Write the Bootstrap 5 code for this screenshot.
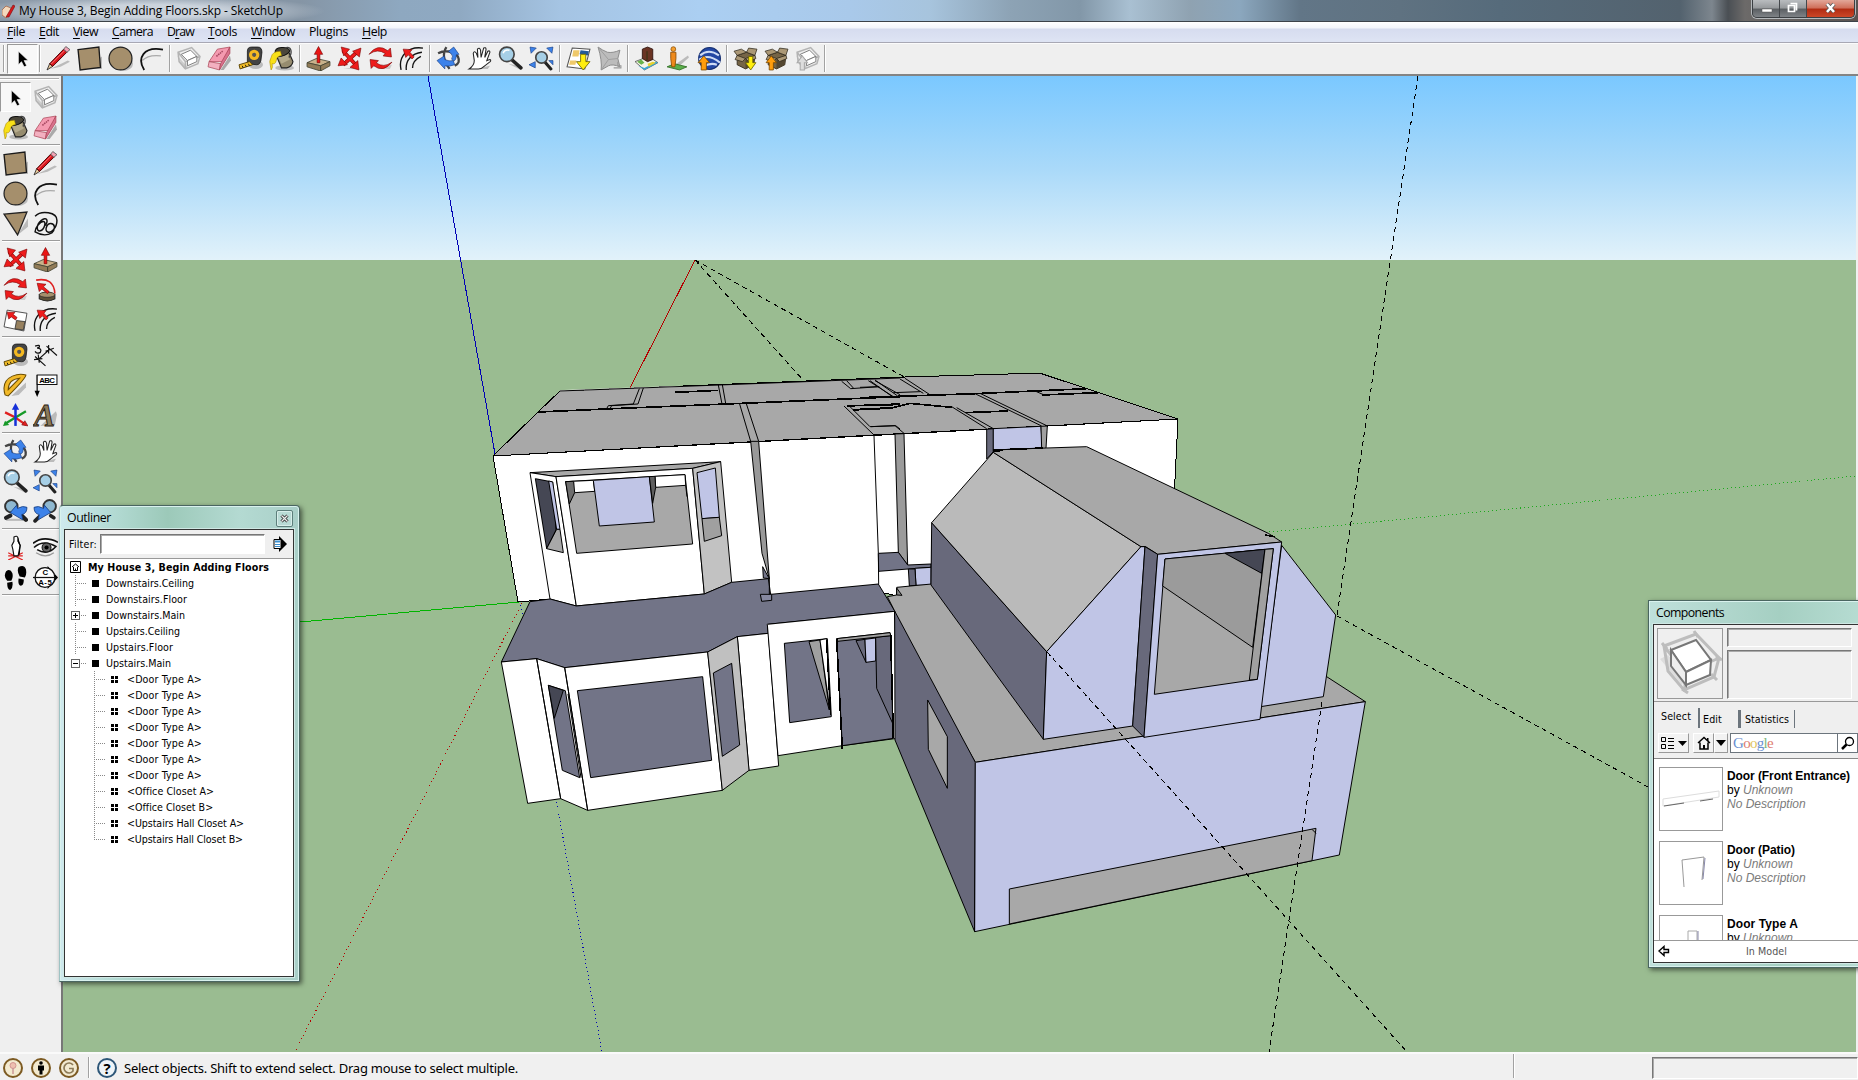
<!DOCTYPE html>
<html lang="en">
<head>
<meta charset="utf-8">
<title>My House 3, Begin Adding Floors.skp - SketchUp</title>
<link href="https://cdn.jsdelivr.net/npm/bootstrap@5.3.0/dist/css/bootstrap.min.css" rel="stylesheet">
<style>
html,body{height:100%;overflow:hidden}
body{font-family:"Open Sans","Noto Sans",sans-serif;font-size:12px;line-height:1;color:#000;background:#f0f0f0}
.app{width:1858px;height:1080px}
.titlebar{height:22px;padding-left:2px;border-bottom:1px solid #3c4249;background:
 radial-gradient(ellipse 175px 16px at 150px 11px,rgba(215,222,230,.85) 40%,rgba(215,222,230,0) 100%),
 linear-gradient(90deg,#8896a5 0,#8595a5 300px,#8ea8c0 400px,#8fa9c2 460px,#a5c4e3 560px,#abcff2 700px,#a9c9ea 850px,#a7c4dd 930px,#8da3b5 1010px,#8297a8 1080px,#a9c0d2 1130px,#8fa2b1 1190px,#8ba7be 1240px,#627687 1300px,#5f7281 1400px,#566b7b 1500px,#53626e 1680px,#7d868e 1712px,#4a4f54 1728px,#6c6a69 1745px,#5a5350 1858px)}
.titlebar .cap{margin-left:4px}
.winbtns{height:18px;margin-right:3px;border:1px solid #3b3f43;border-top:0;border-radius:0 0 5px 5px;box-shadow:0 0 0 1px #b5b9bc;overflow:hidden}
.winbtns span{height:18px;width:27px;background:linear-gradient(#b9bcbf 0,#96999c 45%,#5b5f63 50%,#83878b 100%);border-right:1px solid #44484c}
.winbtns span:last-child{width:47px;border:0;background:linear-gradient(#e2a799 0,#cf6d58 45%,#b02b12 50%,#cf4a2a 100%)}
.menubar{height:21px;background:linear-gradient(#fff 0,#f3f5fb 6px,#d6dcef 7px,#dde3f3 18px);border-bottom:1px solid #a8a8b4}
.menubar a{color:#000;text-decoration:none;margin-left:7px;margin-right:7px;font-size:12.3px}
.menubar u{text-underline-offset:1.5px}
.toolbar{height:33px;background:#efefef;border-top:1px solid #fbfbfb;border-bottom:2px solid #848484;padding-bottom:1px}
.tb{width:31px;height:30px;flex:none;display:flex;align-items:center;justify-content:center}
.tb svg{width:25px;height:25px}
.tb.on{background:#f8f8f8;border:1px solid #fff;border-left-color:#999;border-top-color:#999;padding-right:2px}
.vsep{width:2px;height:27px;margin:0 2px;background:linear-gradient(90deg,#a2a2a2 50%,#fff 50%);flex:none}
.hsep{width:58px;height:2px;margin:2px 1px 2px 2px;background:linear-gradient(#9c9c9c 50%,#fff 50%);flex:none}
.side{width:63px;background:#efefef;border-right:2px solid #777;padding-top:2px}
.side .topline{height:2px;background:#aaa;margin-right:2px;margin-bottom:2px;border-bottom:1px solid #fff}
.side .tb{height:30px;width:30.5px}
.viewport{width:1793px}
.viewport svg{display:block}
.status{height:28px;border-top:2px solid #fafafa;background:#f0f0f0}
.palette{position:absolute;background:linear-gradient(90deg,#bfe0db,#a5cfc2 60%,#b7ddd3);border:1px solid #4a6661;box-shadow:2px 2px 5px rgba(0,0,0,.55),inset 0 0 0 1px #d9f2ee;z-index:2}
#outliner{left:59px;top:505px;width:241px;height:477px;border-radius:4px 4px 0 0;border-left-color:#9fc3c4;padding:0 5px 4px 4px;background:linear-gradient(90deg,#cfe9ee 0,#b5dcd6 20%,#9cc9b9 45%,#b4dad2 75%,#a9cfc8)}
#components{left:1648px;top:600px;width:220px;height:368px;padding:0 4px 4px 4px}
.ptitle{height:23px;padding:2px 1px 0 3px;font-size:12.3px}
.xbtn{width:17px;height:17px;border:1px solid #5d7f7b;border-radius:2px;background:#b9dbd5;box-shadow:inset 0 0 0 1px #d8eeea}
.inner{border:1px solid #333;background:#fff;outline:1px solid #cfe8e4}
.tah{font-family:"DejaVu Sans Condensed","DejaVu Sans",sans-serif;font-stretch:condensed;font-size:10.6px}
.frow{height:29px;background:#efefef;border-bottom:1px solid #999;padding:0 6px 0 4px}
.sunk{border:1px solid #fff;border-left-color:#777;border-top-color:#777;box-shadow:inset 1px 1px 0 #aaa}
.trow{height:16px;white-space:nowrap}
.twig{height:16px;width:11px;flex:none;background:repeating-linear-gradient(#888 0 1px,transparent 1px 2px) 0 0/1px 100% no-repeat,repeating-linear-gradient(90deg,#888 0 1px,transparent 1px 2px) 0 8px/100% 1px no-repeat}
.twig.end{background:repeating-linear-gradient(#888 0 1px,transparent 1px 2px) 0 0/1px 9px no-repeat,repeating-linear-gradient(90deg,#888 0 1px,transparent 1px 2px) 0 8px/100% 1px no-repeat}
.l1{margin-left:10px}.l2{margin-left:29px}
.knob{width:9px;height:9px;border:1px solid #666;background:#fff linear-gradient(#000,#000) center/5px 1px no-repeat;margin-left:6px;flex:none}
.knob.plus{background:linear-gradient(#000,#000) center/5px 1px no-repeat,linear-gradient(#000,#000) center/1px 5px no-repeat,#fff}
.dash{width:6px;height:1px;background:repeating-linear-gradient(90deg,transparent 0 1px,#888 1px 2px);flex:none}
.sq{width:7px;height:7px;background:#000;margin-left:6px;margin-right:7px;flex:none;margin-top:1px}
.sq4{width:7px;height:7px;margin:1px 9px 0 6px;flex:none;background:linear-gradient(#fff,#fff) center/1px 100% no-repeat,linear-gradient(#fff,#fff) center/100% 1px no-repeat,#000}
.comp-h{height:77px;background:#efefef;border-bottom:1px solid #999;padding:3px 0 0 3px}
.thumb1{width:66px;height:71px;border:1px solid #999}
.tabs{height:26px;background:#efefef;padding-top:6px}
.tabs span{height:20px}
.ctool{height:31px;background:#efefef;border-bottom:1px solid #888;padding:5px 0 4px 4px}
.rais{height:20px;border:1px solid #999;border-top-color:#fff;border-left-color:#fff;background:#f2f2f2}
.clist{height:181px;overflow:hidden;padding:8px 0 0 5px;background:#fff}
.citem{height:74px}
.cthumb{width:64px;height:64px;border:1px solid #999;flex:none}
.ctext{padding:2px 0 0 4px;font-family:"Liberation Sans",sans-serif;line-height:14px;font-size:12px;white-space:nowrap}
.ctext b{display:block;font-size:12px}
.ctext em{color:#7b7b7b}
.cfoot{border-top:1px solid #999;height:21px;background:#fff;color:#555}
.goog{font-family:"Liberation Serif",serif;font-size:15px}
.fit{display:inline-block;white-space:pre}
</style>
<script src="https://cdn.jsdelivr.net/npm/bootstrap@5.3.0/dist/js/bootstrap.bundle.min.js"></script>
</head>
<body>
<svg width="0" height="0" class="position-absolute">
<defs>
<symbol id="arrow" viewBox="0 0 24 24"><path d="M9 5v13l3-3 2.500 5 2.500-1-2.500-5h4z" fill="#000" stroke="#fff" stroke-width=".6"/></symbol>
<symbol id="pencil" viewBox="0 0 24 24"><path d="M4 22L21 14l2 1-9 5z" fill="#bbb"/><path d="M1 23l2.500-6 3 2.500z" fill="#e8c89a" stroke="#222" stroke-width=".8"/><path d="M3.500 17L17 3l3 3L6.500 19.500z" fill="#d8141c" stroke="#400" stroke-width=".9"/><path d="M5 17.300L18 4.300" stroke="#ff7a7a" stroke-width=".9"/><path d="M17 3l2-2.500 4 3L20 6z" fill="#f3a3b5" stroke="#555" stroke-width=".8"/></symbol>
<symbol id="rect" viewBox="0 0 24 24"><path d="M6 22h18V10z" fill="#bbb"/><path d="M1 3.500L21 1l1.500 19.500L3 23z" fill="#a58f6c" stroke="#1a1a1a" stroke-width="1.300"/></symbol>
<symbol id="circ" viewBox="0 0 24 24"><ellipse cx="15" cy="17" rx="9" ry="7" fill="#bbb"/><circle cx="12" cy="12" r="11" fill="#a58f6c" stroke="#222" stroke-width="1.200"/></symbol>
<symbol id="tri" viewBox="0 0 24 24"><path d="M14 23L24 7v8z" fill="#bbb"/><path d="M1 3L23 1 14 23z" fill="#a58f6c" stroke="#222" stroke-width="1.200"/></symbol>
<symbol id="arc" viewBox="0 0 24 24"><path d="M3 14Q9 8 21 9.500" fill="none" stroke="#aaa" stroke-width="1.300"/><path d="M5 23C-2 12 4 0 23 3.500" fill="none" stroke="#111" stroke-width="1.700"/></symbol>
<symbol id="free" viewBox="0 0 24 24"><path d="M2 5C8-1 23 1 23 9c0 7-6 13-9 11-3-1-1-8 3-8s5 5 1 9c-5 3-11 2-16-1 0-4 5-10 8-10s1 8-3 9-4-6 1-10 7 0 4 5" fill="none" stroke="#111" stroke-width="1.400"/></symbol>
<symbol id="comp" viewBox="0 0 24 24"><path d="M1 9l7 13 4-1z" fill="#ccc"/><g fill="none" stroke="#b4b4b4" stroke-width="1.500"><path d="M2 6L15 1.500 23 10 21 17 9 22 3 15zM2 6l7 9 14-5M9 15v7"/></g><path d="M5 8l9-4 6 6-9 4z" fill="#fff" stroke="#777" stroke-width=".9"/><path d="M11 14l9-4v5l-9 4z" fill="#fff" stroke="#777" stroke-width=".9"/></symbol>
<symbol id="eraser" viewBox="0 0 24 24"><path d="M13 23L22 9l1 5-7 9z" fill="#aaa"/><path d="M2 15L10 3l12-2-6 14z" fill="#f49ab0" stroke="#a45" stroke-width=".7"/><path d="M2 15l11 2-1 6L1 20z" fill="#f3b0c0" stroke="#a45" stroke-width=".7"/><path d="M13 17L22 1v6l-10 16z" fill="#d8708c" stroke="#a45" stroke-width=".7"/><path d="M9 10l6-5" stroke="#a4465e" stroke-width="1.500" stroke-dasharray="1.500 .7"/></symbol>
<symbol id="tape" viewBox="0 0 24 24"><ellipse cx="17" cy="18" rx="7" ry="4" fill="#bbb"/><path d="M9 5q0-4 4-4h6q4 0 4 5l-1 8q-1 4-4 4l-9-1z" fill="#444" stroke="#111" stroke-width=".7"/><circle cx="15.500" cy="8.500" r="5" fill="#f5b921"/><circle cx="15.500" cy="8.500" r="2" fill="#555"/><path d="M1 18l10-3 3 3-12 4z" fill="#f2bd28" stroke="#5a4200" stroke-width=".9"/><path d="M4 19l1 2M7 18l1 2M10 17l1 2" stroke="#111" stroke-width=".9"/></symbol>
<symbol id="paint" viewBox="0 0 24 24"><ellipse cx="15" cy="21" rx="9" ry="2.500" fill="#bbb"/><path d="M7 9L19 6l4 9q-1 5-6 6l-5 0z" fill="#968c6f" stroke="#222" stroke-width="1.100"/><path d="M9 11l9-3 2 5-8 4z" fill="#b5ab8c"/><path d="M6 7Q5 2 12 1.500T20 5q-4 5-11 5z" fill="#4a463a" stroke="#111"/><path d="M15 2q5-2 6 2t-2 7" fill="none" stroke="#444" stroke-width="1.300"/><path d="M11 5Q3 5 2 11q-2 4-1 6l1 6q2-2 1-6 3 1 4-3 0-4 5-5z" fill="#f8e018" stroke="#a08000" stroke-width=".5"/></symbol>
<symbol id="push" viewBox="0 0 24 24"><path d="M1 16l9-4 13 3-9 4z" fill="#c9b28b" stroke="#443" stroke-width=".8"/><path d="M1 16v4l13 4v-5zM14 19v5l9-5v-4z" fill="#927c58" stroke="#443" stroke-width=".8"/><path d="M10.700 16V8H8l4-7.500L16 8h-2.700v8z" fill="#ea1515" stroke="#700" stroke-width=".6"/></symbol>
<symbol id="move" viewBox="0 0 24 24"><path d="M6 22h16l-3-2z" fill="#ccc"/><path d="M6 5l12 13M19 6L6 18" stroke="#8a0c0c" stroke-width="3.600"/><path d="M5 4l14 15M19 6L6 18" stroke="#ee1c1c" stroke-width="2.400"/><g fill="#ee1c1c" stroke="#7c0808" stroke-width=".6"><path d="M4 1l8 2-5.500 6.500zM23 2l-1.500 8.500-6.500-5.500zM1 19l3-7.500L10 18zM21 23l-8.500-2.500L20 14z"/></g></symbol>
<symbol id="rot" viewBox="0 0 24 24"><path d="M8 22h13l2-4z" fill="#ccc"/><g fill="#ee1c1c" stroke="#7c0808" stroke-width=".6"><path d="M1 8Q9-3 19 4.500L21.500 2l1 8.500-8-1L16.500 7.200Q9 2 1 8z"/><path d="M23 15.500Q15 26 5.500 19L3 21.500l-1-8.500 8 1-2 2.300q7 5 15-.8z"/></g></symbol>
<symbol id="offset" viewBox="0 0 24 24"><path d="M2 23C-1 10 8 0 23 2M7 23C6 14 12 7 22 6M13 21q0-7 8-11" fill="none" stroke="#111" stroke-width="1.300"/><path d="M12.500 12.500L9 8.500 6.500 11 4 3l8.500.500-2 2.500 4 4.500z" fill="#ee1c1c" stroke="#7c0808" stroke-width=".6"/></symbol>
<symbol id="follow" viewBox="0 0 24 24"><path d="M3 3q17-3 18 13" fill="none" stroke="#d22" stroke-width="1.500"/><path d="M6 17q7-5 15 0v4q-7 4-15 0z" fill="#5d5038" stroke="#222"/><ellipse cx="13.500" cy="17" rx="7.500" ry="2.500" fill="#a58f6c" stroke="#222" stroke-width=".6"/><path d="M14 16L8.500 11.500 6 14 4 6l8.500 1-2.500 2.300L15.500 14z" fill="#ee1c1c" stroke="#7c0808" stroke-width=".6"/></symbol>
<symbol id="scale" viewBox="0 0 24 24"><path d="M4 3l19 3-3 17L1 19z" fill="#fff" stroke="#333" stroke-width=".8"/><path d="M13 13l8 1-1.500 8-8-1z" fill="#97815f" stroke="#333" stroke-width=".8"/><path d="M12 12.500L8 9.500l-2.500 2L4 5l7.500 0-1.700 2.300L13.500 10z" fill="#ee1c1c" stroke="#7c0808" stroke-width=".6"/></symbol>
<symbol id="orbit" viewBox="0 0 24 24"><path d="M10 1Q4 10 13 22M2 7q10-5 19 3 3 6-3 9" fill="none" stroke="#444" stroke-width="2.200"/><path d="M1 14l7-4.500.500 3.500q4 2 8 1l1.500 4q-5 2-9.500 1l0 3zM12 5l5-4 5 7-2.500.5q0 5-2.500 6l-2-2q2-3-.5-5z" fill="#3c82ea" stroke="#163c80" stroke-width=".6"/></symbol>
<symbol id="hand" viewBox="0 0 24 24"><path d="M8 22h12l2-3z" fill="#bbb"/><path d="M2 22q5-3 5-8L6 7q1-3 3 0l1.500 4L10 3q2-2 3 1l.5 7L16 2q2-1 2.300 1L17 11l3-6q2-1 2 1l-3 8 3-1q2 1-1 3l-4 3q-3 3-6 3z" fill="#fff" stroke="#222" stroke-width="1"/></symbol>
<symbol id="mag" viewBox="0 0 24 24"><path d="M10 17l12 6-2-4z" fill="#bbb"/><path d="M13 13l9 8" stroke="#222" stroke-width="3.400" stroke-linecap="round"/><circle cx="8.500" cy="8" r="7" fill="#a6cfe6" stroke="#444" stroke-width="1.600"/><path d="M5 7q1-4 6-3" stroke="#fff" stroke-width="1.500" fill="none"/></symbol>
<symbol id="magx" viewBox="0 0 24 24"><path d="M14 14l7 8" stroke="#222" stroke-width="3" stroke-linecap="round"/><circle cx="12" cy="11" r="5.500" fill="#a6cfe6" stroke="#444" stroke-width="1.600"/><path d="M1 1l6 1-5 5zM23 1l-6 1 5 5zM0 18l6-3 0 6zM23 14l-4 0 4 4z" fill="#3c82ea" stroke="#163c80" stroke-width=".6"/></symbol>
<symbol id="prev" viewBox="0 0 24 24"><path d="M3 19h17v2H3z" fill="#bbb"/><circle cx="8" cy="7" r="6" fill="#8fb8d0" stroke="#333" stroke-width="1.800"/><path d="M3 18l4-2M18 16l4 4" stroke="#222" stroke-width="4" stroke-linecap="round"/><path d="M7 13l6-7 1 3q5-3 9-1 0 6-5 7l1 5z" fill="#3c82ea" stroke="#163c80" stroke-width=".8"/></symbol>
<symbol id="next" viewBox="0 0 24 24"><g transform="translate(24 0) scale(-1 1)"><circle cx="8" cy="7" r="6" fill="#8fb8d0" stroke="#333" stroke-width="1.800"/><path d="M18 17l4 4M4 18l3-2" stroke="#222" stroke-width="3.500" stroke-linecap="round"/><path d="M7 13l6-7 1 3q5-3 9-1 0 6-5 7l1 5z" fill="#3c82ea" stroke="#163c80" stroke-width=".8"/></g></symbol>
<symbol id="getv" viewBox="0 0 24 24"><path d="M6 2l17 1-5 19-17-2z" fill="#fff" stroke="#555"/><path d="M7 4l6 0-1 6-6 0zM4 14l6 0-1 4-6 0z" fill="#efc96a"/><path d="M14 4l8 1-1 4-8-1z" fill="#245a96"/><path d="M14 8h5v7h4l-6.500 8L10 15h4z" fill="#ffee10" stroke="#6b6400" stroke-width=".8"/></symbol>
<symbol id="terr" viewBox="0 0 24 24"><path d="M1 1q4 3 9 5 5 1 12-2l-2 8 2 8q-7-3-11-1L4 23q1-9-3-22z" fill="#bcbcbc" stroke="#888" stroke-width=".9"/><path d="M1 1l10 12 9-1M11 13L4 23" stroke="#999" fill="none" stroke-width=".8"/><path d="M20 15v4h3v2h-7" fill="none" stroke="#999"/></symbol>
<symbol id="bldg" viewBox="0 0 24 24"><path d="M1 15l13-5 9 6-13 7z" fill="#f4f4e8" stroke="#555" stroke-width=".8"/><path d="M10 21l11-6 2 1-13 7-6-4z" fill="#35a7d8"/><path d="M13 17l5-2 3 1-7 4z" fill="#e8d030"/><path d="M3 15l4-2 3 3-3 2z" fill="#67b34b"/><path d="M8 3l5-2 5 2v10l-5 2-5-3z" fill="#6a3423" stroke="#2b100a" stroke-width=".8"/><path d="M12.500 5v9" stroke="#331"/></symbol>
<symbol id="pers" viewBox="0 0 24 24"><path d="M11 17L22 9l1 2-10 9z" fill="#bbb"/><path d="M2 20l7-3 12 3-7 3z" fill="#5bb04c" stroke="#2c6a22" stroke-width=".8"/><circle cx="8" cy="3" r="2.300" fill="#f4a030" stroke="#8a4a00" stroke-width=".7"/><path d="M5.500 6h5v6l-1 8H6.500l-1-8z" fill="#ee8a1c" stroke="#8a4a00" stroke-width=".8"/></symbol>
<symbol id="earth" viewBox="0 0 24 24"><circle cx="13" cy="12" r="10.500" fill="#2347a4" stroke="#173070"/><path d="M4 9q8-7 18 0M3 13q9-6 20 3M8 19q7-3 12-1" fill="none" stroke="#cfdcf5" stroke-width="2"/><path d="M5 23v-7H2l5.500-6.500L13 16h-3v7z" fill="#ff9d0c" stroke="#7d4a00" stroke-width=".8"/></symbol>
<symbol id="box" viewBox="0 0 24 24"><path d="M4 9l9-3 8 3-1 9-8 4-8-4z" fill="#756446" stroke="#2a2418" stroke-width=".8"/><path d="M12 12v10l8-4 1-9z" fill="#544731"/><path d="M4 9L1 5l7-2 5 3zM13 6l2-4 8 1-2 6zM4 9l8 3-3 3-7-2zM12 12l9-3 1 3-7 3z" fill="#ab9876" stroke="#2a2418" stroke-width=".7"/></symbol>
<symbol id="boxd" viewBox="0 0 24 24"><use href="#box"/><path d="M15 10h4v6h3l-5 7-5-7h3z" fill="#ffee10" stroke="#6b6400" stroke-width=".8"/></symbol>
<symbol id="boxu" viewBox="0 0 24 24"><use href="#box"/><path d="M5 23v-7H2l5-6.500L12 16H9v7z" fill="#ff9d0c" stroke="#7d4a00" stroke-width=".8"/></symbol>
<symbol id="compu" viewBox="0 0 24 24"><use href="#comp"/><path d="M5 23v-7H2l5-6.500L12 16H9v7z" fill="#ddd" stroke="#aaa"/></symbol>
<symbol id="dim" viewBox="0 0 24 24"><path d="M2 13l10 9M13 3l10 9M5 16L16 6M1 16l8-1M6 19l-1-8M12 8l8-3M15 10V2" stroke="#111" stroke-width="1.100" fill="none"/><path d="M2 3q5-2 4 1L4 5q5 0 3 4-3 2-5-1" stroke="#111" fill="none" stroke-width="1.200"/></symbol>
<symbol id="prot" viewBox="0 0 24 24"><path d="M8 22L22 9v5l-7 7z" fill="#bbb"/><path fill-rule="evenodd" d="M2 21Q-2 8 9 3 16 0 22 2 22 5 5 22zM5 16Q5 6 16 5z" fill="#f2b928" stroke="#6b4d00"/></symbol>
<symbol id="label" viewBox="0 0 24 24"><path d="M4 2v17" stroke="#111" stroke-width="1.200"/><path d="M1.500 17h5L4 23z"/><path d="M4 2h19v9H4z" fill="#fff" stroke="#111"/><text x="6" y="9.500" font-size="7.500" font-weight="bold" font-family="Liberation Sans" textLength="15">ABC</text></symbol>
<symbol id="axes" viewBox="0 0 24 24"><path d="M12 14l10 7M12 14L2 9" stroke="#e02020" stroke-width="2.200"/><path d="M12 14L2 20M12 14l10-6" stroke="#169a28" stroke-width="2.200"/><path d="M12 22V5" stroke="#1530d8" stroke-width="2.400"/><path d="M8.500 6.500L12 0l3.500 6.500z" fill="#1530d8"/><path d="M0 22l2-5 4 4z" fill="#169a28"/><path d="M24 22l-6-1 3-4z" fill="#e02020" stroke="#600" stroke-width=".5"/></symbol>
<symbol id="text3" viewBox="0 0 24 24"><path d="M7 22L22 8l1 3-2 10z" fill="#bbb"/><text x="1" y="22" font-size="30" font-weight="bold" font-style="italic" font-family="Liberation Serif" fill="#8b7a5a" stroke="#2a2010" stroke-width=".9">A</text></symbol>
<symbol id="poscam" viewBox="0 0 24 24"><path d="M5 17l14 7M19 17L5 24M5 20h14" stroke="#e02020" stroke-width="1.200"/><path d="M10.500 2q3-2 4 1v3l2 4-1 5-1 5h-4L9.500 14 8.500 10l2-4z" fill="#fff" stroke="#111" stroke-width="1.100"/><path d="M14 2v4l2 4-1 9h1l1-9-2-6z"/></symbol>
<symbol id="eye" viewBox="0 0 24 24"><path d="M0 8Q10 0 24 7M1 12q9-8 21-1-8 9-18 3" fill="#fff" stroke="#111" stroke-width="1.500"/><circle cx="13" cy="12" r="4.300" fill="#666" stroke="#111"/><circle cx="13" cy="12" r="2"/><path d="M3 17q9 6 17 0" stroke="#999" fill="none" stroke-width="1.300"/></symbol>
<symbol id="feet" viewBox="0 0 24 24"><path d="M3 6q4-3 6 2 1 4-1 7l-4 0Q0 11 3 6zM4 17l5-1q1 6-2 8-3 0-3-7zM15 2q5-3 7 2 1 5-1 8l-5-1q-3-5-1-9zM15 13l5 1q0 6-3 6-3-1-2-7z"/></symbol>
<symbol id="section" viewBox="0 0 24 24"><path d="M0 12h4" stroke="#111" stroke-width="1.200"/><path d="M14 1l10 11-10 11z"/><circle cx="11.500" cy="12" r="9.500" fill="#fff" stroke="#111" stroke-width="1.300"/><path d="M2 12h20" stroke="#111" stroke-width="1.200"/><text x="9" y="10" font-size="7.500" font-weight="bold" font-family="Liberation Sans">C</text><text x="5" y="19" font-size="7.500" font-weight="bold" font-family="Liberation Sans" textLength="13">A-5</text></symbol>
<symbol id="home" viewBox="0 0 14 14"><path d="M1 7l6-5.500L13 7M3 6.500V13h8V6.500" fill="none" stroke="#000" stroke-width="1.500"/><path d="M6 9h2v4H6zM10 2h1.500v3H10z"/></symbol>
<linearGradient id="sky" x1="0" y1="0" x2="0" y2="1"><stop offset="0" stop-color="#7ac8ff"/><stop offset=".5" stop-color="#a9d9f9"/><stop offset="1" stop-color="#e2f2fa"/></linearGradient>
</defs></svg>

<div class="app d-flex flex-column position-relative">
<header class="titlebar d-flex align-items-center flex-shrink-0">
 <svg width="13" height="16" viewBox="0 0 13 16"><path d="M0 7l4-4 5 2-1 6-4 4-4-3z" fill="#f3d9bd" stroke="#a64" stroke-width=".8"/><path d="M4 14L11 2l2 1-6 11z" fill="#d8181c" stroke="#711" stroke-width=".6"/></svg>
 <span class="cap fit" data-w="264" style="font-size:12px">My House 3, Begin Adding Floors.skp - SketchUp</span>
 <div class="winbtns d-flex ms-auto align-self-start">
  <span><svg width="27" height="18"><path d="M9 9h10v3H9z" fill="#fff" stroke="#555" stroke-width=".5"/></svg></span>
  <span><svg width="27" height="18"><path d="M10.500 3.500h6v7M8.500 5.500h6v6h-6z" fill="none" stroke="#fff" stroke-width="1.700"/></svg></span>
  <span><svg width="47" height="18"><path d="M20 4l7 8M27 4l-7 8" stroke="#555" stroke-width="4"/><path d="M20 4l7 8M27 4l-7 8" stroke="#fff" stroke-width="2.500"/></svg></span>
 </div>
</header>
<nav class="menubar d-flex align-items-center flex-shrink-0">
 <a class="fit" data-w="18"><u>F</u>ile</a><a class="fit" data-w="20"><u>E</u>dit</a><a class="fit" data-w="25"><u>V</u>iew</a><a class="fit" data-w="41"><u>C</u>amera</a><a class="fit" data-w="27">D<u>r</u>aw</a><a class="fit" data-w="29"><u>T</u>ools</a><a class="fit" data-w="44"><u>W</u>indow</a><a class="fit" data-w="39">Plugins</a><a class="fit" data-w="25"><u>H</u>elp</a>
</nav>
<div class="toolbar d-flex align-items-center flex-shrink-0">
 <div class="vsep" style="margin:0 2px 0 3px"></div>
 <div class="tb on"><svg><use href="#arrow"/></svg></div><div class="vsep" style="margin:0 2px 0 1px"></div>
 <div class="tb"><svg><use href="#pencil"/></svg></div><div class="tb"><svg><use href="#rect"/></svg></div><div class="tb"><svg><use href="#circ"/></svg></div><div class="tb"><svg><use href="#arc"/></svg></div><div class="vsep"></div>
 <div class="tb"><svg><use href="#comp"/></svg></div><div class="tb"><svg><use href="#eraser"/></svg></div><div class="tb"><svg><use href="#tape"/></svg></div><div class="tb"><svg><use href="#paint"/></svg></div><div class="vsep"></div>
 <div class="tb"><svg><use href="#push"/></svg></div><div class="tb"><svg><use href="#move"/></svg></div><div class="tb"><svg><use href="#rot"/></svg></div><div class="tb"><svg><use href="#offset"/></svg></div><div class="vsep"></div>
 <div class="tb"><svg><use href="#orbit"/></svg></div><div class="tb"><svg><use href="#hand"/></svg></div><div class="tb"><svg><use href="#mag"/></svg></div><div class="tb"><svg><use href="#magx"/></svg></div><div class="vsep"></div>
 <div class="tb"><svg><use href="#getv"/></svg></div><div class="tb"><svg><use href="#terr"/></svg></div><div class="vsep"></div>
 <div class="tb"><svg><use href="#bldg"/></svg></div><div class="tb"><svg><use href="#pers"/></svg></div><div class="tb"><svg><use href="#earth"/></svg></div><div class="vsep"></div>
 <div class="tb"><svg><use href="#boxd"/></svg></div><div class="tb"><svg><use href="#boxu"/></svg></div><div class="tb"><svg><use href="#compu"/></svg></div><div class="vsep" style="margin:0 0 0 1px"></div>
</div>
<main class="d-flex flex-grow-1" style="min-height:0">
 <aside class="side d-flex flex-wrap align-content-start flex-shrink-0">
  <div class="topline w-100"></div>
  <div class="tb on"><svg><use href="#arrow"/></svg></div><div class="tb"><svg><use href="#comp"/></svg></div>
  <div class="tb"><svg><use href="#paint"/></svg></div><div class="tb"><svg><use href="#eraser"/></svg></div><div class="hsep"></div>
  <div class="tb"><svg><use href="#rect"/></svg></div><div class="tb"><svg><use href="#pencil"/></svg></div><div class="tb"><svg><use href="#circ"/></svg></div><div class="tb"><svg><use href="#arc"/></svg></div><div class="tb"><svg><use href="#tri"/></svg></div><div class="tb"><svg><use href="#free"/></svg></div><div class="hsep"></div>
  <div class="tb"><svg><use href="#move"/></svg></div><div class="tb"><svg><use href="#push"/></svg></div><div class="tb"><svg><use href="#rot"/></svg></div><div class="tb"><svg><use href="#follow"/></svg></div><div class="tb"><svg><use href="#scale"/></svg></div><div class="tb"><svg><use href="#offset"/></svg></div><div class="hsep"></div>
  <div class="tb"><svg><use href="#tape"/></svg></div><div class="tb"><svg><use href="#dim"/></svg></div><div class="tb"><svg><use href="#prot"/></svg></div><div class="tb"><svg><use href="#label"/></svg></div><div class="tb"><svg><use href="#axes"/></svg></div><div class="tb"><svg><use href="#text3"/></svg></div><div class="hsep"></div>
  <div class="tb"><svg><use href="#orbit"/></svg></div><div class="tb"><svg><use href="#hand"/></svg></div><div class="tb"><svg><use href="#mag"/></svg></div><div class="tb"><svg><use href="#magx"/></svg></div><div class="tb"><svg><use href="#prev"/></svg></div><div class="tb"><svg><use href="#next"/></svg></div><div class="hsep"></div>
  <div class="tb"><svg><use href="#poscam"/></svg></div><div class="tb"><svg><use href="#eye"/></svg></div><div class="tb"><svg><use href="#feet"/></svg></div><div class="tb"><svg><use href="#section"/></svg></div><div class="hsep"></div>
 </aside>
 <section class="viewport">
 <svg width="1793" height="976" viewBox="63 76 1793 976" shape-rendering="crispEdges">
  <rect x="63" y="76" width="1793" height="184" fill="url(#sky)"/>
  <rect x="63" y="260" width="1793" height="792" fill="#9abc91"/>
  <g fill="none">
   <path d="M428 76L495 454" stroke="#0000b4"/>
   <path d="M695 260L630 388" stroke="#b40000"/>
   <path d="M300 622L519 602" stroke="#00b400"/>
   <path d="M522 603L295 1052" stroke="#b40000" stroke-dasharray="1 3"/>
   <path d="M520 601L602 1052" stroke="#0000b4" stroke-dasharray="1 3"/>
   <path d="M1269 532L1856 476" stroke="#1fa81f" stroke-dasharray="1 3"/>
   <path d="M695 260L803 380M695 260L906 378M1418 76L1337 615M1337 616L1650 788" stroke="#000" stroke-dasharray="5 4"/>
  </g>
  <g stroke="#000" stroke-linejoin="bevel">
  <!-- upper storey walls and roof -->
  <path d="M493 456L1178 419 1173 520 1000 620 880 592 771 595 576 606 550 599 518 602z" fill="#fff"/>
  <path d="M560 391L905 377 1026 373.500 1041 373.500 1178 419 874 435 493 456 538 412z" fill="#a8a8a8"/>
  <g transform="translate(480 360) scale(.33333)" stroke-width="3">
   <g fill="none">
    <path d="M240 92L600 79" stroke="#fff"/><path d="M240 93L720 75 1260 54"/>
    <path d="M175 156L400 146 740 132 1260 110" stroke-width="5"/>
    <path d="M490 84L474 132 395 137 390 146M478 86L460 132 385 137 380 146M715 75L726 132M727 74L737 130M778 129L812 244M798 128L836 244M1092 138L1183 226M1108 138L1170 200 1247 197 1260 207M1085 64L1112 86 1198 80M1100 62L1120 84M1165 62L1240 110M1185 62L1260 104"/>
    <path d="M585 97L715 91M1120 150L1250 142M1100 138L1260 132" stroke-width="5"/>
   </g>
   <path d="M150 338L722 305 638 325 228 350z" fill="#a8a8a8"/>
   <path d="M150 338L228 350 289 738 210 717z" fill="#fff"/>
   <path d="M228 350L638 325 673 702 289 738z" fill="#fff"/>
   <path d="M638 325L722 305 755 667 673 702z" fill="#c2c2c2"/>
   <path d="M166 356L218 366 228 510 200 566z" fill="#454754"/>
   <path d="M206 363L218 366 240 508 230 508z" fill="#c0c5e6"/>
   <path d="M230 508L240 508 250 578 200 566z" fill="#a8a8a8"/>
   <path d="M257 365L615 344 638 552 290 580z" fill="#a8a8a8"/>
   <path d="M257 365L340 361 344 394 284 398z" fill="#fff"/>
   <path d="M257 365L281 364 284 398 268 432z" fill="#6e6e6e"/>
   <path d="M340 361L508 350 523 486 358 498z" fill="#c0c5e6"/>
   <path d="M525 349L615 344 617 376 527 382z" fill="#fff"/>
   <path d="M508 350L525 349 527 382 518 430z" fill="#5e5e5e"/>
   <path d="M617 376L621 410"/>
   <path d="M651 338L706 324 718 472 666 476z" fill="#c0c5e6"/>
   <path d="M666 476L718 472 725 527 673 544z" fill="#a0a0a0"/>
   <path d="M812 244L836 244 868 656 846 580z" fill="#999"/>
  </g>
  <g transform="translate(860 360) scale(.33333)" stroke-width="3">
   <g fill="none">
    <path d="M0 113L345 101 680 86M315 158L445 153M545 105L715 98M0 148L90 145 150 130 275 142M0 137L100 134" stroke-width="5"/>
    <path d="M345 101L545 198M360 100L562 198M275 140L380 206M290 143L400 206M120 57L190 100M135 55L208 103M30 62L97 110M45 60L113 108M525 93L555 106M0 82L55 80M100 98L180 95M33 200L105 197 132 220"/>
    <path d="M42 226L55 580 56 672"/>
   </g>
   <path d="M105 222L132 221 143 615 115 577z" fill="#9b9b9b"/>
   <path d="M55 580L115 577 143 615 213 612 213 622 145 627 56 634z" fill="#727487"/>
   <path d="M165 625L213 622 213 676 168 676z" fill="#c0c5e6"/>
   <path d="M145 627L165 627 168 676 148 678z" fill="#68697b"/>
   <path d="M380 208L400 206 400 275 380 297z" fill="#68697b"/>
   <path d="M400 206L543 199 547 264 400 270z" fill="#c0c5e6"/>
   <path d="M543 199L562 198 558 266 545 265z" fill="#a0a0a0"/>
  </g>
  <!-- ground floor front -->
  <g transform="translate(480 590) scale(.33333)" stroke-width="3">
   <path d="M150 35L210 27 289 48 673 12 755 -23 865 -34 872 13 1195 -18 1245 64 862 103 865 130 772 140 683 186 254 233 170 206 64 216z" fill="#727487"/>
   <path d="M841 13L875 13 875 31 845 34zM868 13V-34" fill="#8688a0"/><path d="M848 -70L868 -34 850 -36z" fill="#727487"/>
   <path d="M64 216L170 206 242 626 143 640zM170 206L254 233 323 661 242 626zM254 233L683 186 727 601 323 661zM772 140L865 130 896 528 807 541z" fill="#fff"/>
   <path d="M683 186L772 140 807 541 727 601z" fill="#c0c0c0"/>
   <path d="M862 103L1244 64 1251 445 1087 467 894 497z" fill="#fff"/>
   <path d="M205 286L256 302 299 563 247 541z" fill="#727487"/><path d="M205 286L250 301 223 385z" fill="#454754"/><path d="M264 312L303 563" fill="none"/>
   <path d="M292 302L668 260 695 511 332 563zM700 249L755 220 779 465 727 499zM913 160L1042 146 1054 380 929 398zM1070 146L1230 128 1240 445 1087 467z" fill="#727487"/>
   <path d="M987 155L1020 150 1048 360z" fill="#a0a0a0"/><path d="M1020 150L1040 146 1050 360z" fill="#fff"/><path d="M1040 150L1052 375" stroke-width="5"/>
   <path d="M1128 152L1158 217 1155 148z" fill="#68697b"/>
   <path d="M1155 148L1187 144 1187 213 1158 217z" fill="#c0c5e6"/>
   <path d="M1187 142L1232 137 1238 400 1190 295z" fill="#68697b"/>
   <path d="M1070 146L1230 128 1232 137 1072 154z" fill="#a0a0a0"/>
   <path d="M1070 146L1087 478M1232 132L1240 445" stroke-width="5"/>
  </g>
  <!-- garage -->
  <g transform="translate(880 580) scale(.33333)" stroke-width="3">
   <path d="M22 50L50 45 50 22 155 12 1340 290 1456 365 286 547 45 118 44 93z" fill="#a8a8a8"/><path d="M50 24L66 46 50 45z" fill="#888"/>
   <path d="M44 93L286 547 284 1055 45 480z" fill="#68697b"/>
   <path d="M286 547L1456 365 1378 825 284 1055z" fill="#c0c5e6"/>
   <path d="M388 927L1308 745 1296 842 388 1032z" fill="#a8a8a8"/><path d="M1296 748L1308 760" fill="none"/>
   <path d="M143 360L202 470 202 625 145 508z" fill="#a8a8a8"/>
  </g>
  <!-- wing above the garage -->
  <g transform="translate(860 360) scale(.33333)" stroke-width="3">
   <path d="M215 488L560 875 550 1138 213 675z" fill="#68697b"/>
   <path d="M400 277L215 488 560 875 843 560z" fill="#bababa"/>
   <path d="M400 270L560 264 680 260 1225 520 1265 546 893 583 857 560 843 560 400 277z" fill="#a8a8a8"/><path d="M400 270L550 264M400 274L430 271M1215 525L1245 530" stroke-width="5"/>
   <path d="M1265 556L1427 765 1390 1010 1202 1040z" fill="#c0c5e6"/>
   <path d="M560 875L843 560 855 560 818 1098 550 1138z" fill="#c0c5e6"/>
   <path d="M855 560L893 583 852 1132 818 1098z" fill="#68697b"/>
   <path d="M893 583L1265 546 1200 1078 852 1132z" fill="#c0c5e6"/>
   <path d="M915 597L1240 566 1192 958 883 1003z" fill="#a8a8a8"/>
   <path d="M915 597L1215 568 1178 862 908 678z" fill="#9b9b9b"/>
   <path d="M1095 580L1215 568 1205 640z" fill="#454754"/>
   <path d="M1215 568L1240 566 1192 958 1168 960z" fill="#a0a0a0"/>
  </g>
  <path d="M1047 652L1407 1052M1322 702L1269 1052" fill="none" stroke-dasharray="5 4"/>
  </g>
 </svg>
 </section>
</main>
<footer class="status d-flex align-items-center flex-shrink-0">
 <svg class="flex-shrink-0" width="82" height="26" viewBox="0 0 82 26"><g fill="#f3ead0" stroke="#7c5a22" stroke-width="2"><circle cx="13" cy="14" r="9"/><circle cx="41" cy="14" r="9"/><circle cx="69" cy="14" r="9"/></g><circle cx="13" cy="11.500" r="3" fill="#eec0b0" stroke="#c88" stroke-width=".8"/><path d="M13 14v6" stroke="#c99" stroke-width="1.500"/><circle cx="41" cy="9" r="1.800"/><path d="M38 11.500h6v5h-1.500v4h-3v-4h-1.500z"/><path d="M73 11a5 5 0 1 0 0 6v-2.500h-4" fill="none" stroke="#8d7b58" stroke-width="1.700"/></svg>
 <div class="vsep" style="height:21px;margin:0 7px 0 6px"></div>
 <svg width="20" height="26" viewBox="0 0 20 26" class="flex-shrink-0"><circle cx="10" cy="14" r="9" fill="#eef4f8" stroke="#2d5678" stroke-width="2"/><text x="10" y="19.500" text-anchor="middle" font-size="15" font-weight="bold" font-family="Open Sans">?</text></svg>
 <span class="fit" style="margin-left:7px;margin-top:3px;font-size:13px;font-family:'Noto Sans'" data-w="394">Select objects. Shift to extend select. Drag mouse to select multiple.</span>
 <div class="ms-auto h-100 d-flex"><div class="vsep" style="height:24px"></div><div style="width:135px"></div><div class="sunk" style="width:206px;height:22px;margin-top:3px"></div></div>
</footer>

<section class="palette d-flex flex-column" id="outliner">
 <div class="ptitle d-flex align-items-center justify-content-between"><span class="fit" data-w="44">Outliner</span><span class="xbtn d-flex align-items-center justify-content-center"><svg width="9" height="9"><path d="M1.500 1.500l6 6M7.500 1.500l-6 6" stroke="#333" stroke-width="3"/><path d="M1.500 1.500l6 6M7.500 1.500l-6 6" stroke="#eee" stroke-width="1.200"/></svg></span></div>
 <div class="inner flex-grow-1 tah">
  <div class="frow d-flex align-items-center"><span class="fit" data-w="28">Filter:</span><span class="sunk bg-white" style="width:165px;height:20px;margin-left:3px"></span><svg width="14" height="16" class="ms-auto" viewBox="0 0 14 16"><path d="M6 0l8 8-8 8z"/><path d="M1 3.500h7v9H1z" fill="#fff" stroke="#000"/><path d="M2 4.500h5v2H2zM2 8h5v1H2zM2 10h5v1H2z" fill="#3b8fd0"/></svg></div>
  <div class="tree">
   <div class="trow d-flex align-items-center"><svg width="11" height="12" viewBox="0 0 11 12" style="margin-left:5px;margin-right:7px" fill="none" stroke="#000"><path d="M.5.5h10v11H.500z"/><path d="M2 6l3.500-3L9 6M3.500 6v3.500h4V6M5.500 7.500v2"/></svg><b class="fit" data-w="181">My House 3, Begin Adding Floors</b></div>
   <div class="trow d-flex align-items-center"><i class="twig l1"></i><i class="sq"></i><span class="fit" data-w="88">Downstairs.Ceiling</span></div>
   <div class="trow d-flex align-items-center"><i class="twig l1"></i><i class="sq"></i><span class="fit" data-w="81">Downstairs.Floor</span></div>
   <div class="trow d-flex align-items-center"><i class="knob plus"></i><i class="dash"></i><i class="sq"></i><span class="fit" data-w="79">Downstairs.Main</span></div>
   <div class="trow d-flex align-items-center"><i class="twig l1"></i><i class="sq"></i><span class="fit" data-w="74">Upstairs.Ceiling</span></div>
   <div class="trow d-flex align-items-center"><i class="twig l1"></i><i class="sq"></i><span class="fit" data-w="67">Upstairs.Floor</span></div>
   <div class="trow d-flex align-items-center"><i class="knob"></i><i class="dash"></i><i class="sq"></i><span class="fit" data-w="65">Upstairs.Main</span></div>
   <div class="trow d-flex align-items-center"><i class="twig l2"></i><i class="sq4"></i><span class="fit" data-w="75">&lt;Door Type A&gt;</span></div>
   <div class="trow d-flex align-items-center"><i class="twig l2"></i><i class="sq4"></i><span class="fit" data-w="75">&lt;Door Type A&gt;</span></div>
   <div class="trow d-flex align-items-center"><i class="twig l2"></i><i class="sq4"></i><span class="fit" data-w="75">&lt;Door Type A&gt;</span></div>
   <div class="trow d-flex align-items-center"><i class="twig l2"></i><i class="sq4"></i><span class="fit" data-w="75">&lt;Door Type A&gt;</span></div>
   <div class="trow d-flex align-items-center"><i class="twig l2"></i><i class="sq4"></i><span class="fit" data-w="75">&lt;Door Type A&gt;</span></div>
   <div class="trow d-flex align-items-center"><i class="twig l2"></i><i class="sq4"></i><span class="fit" data-w="75">&lt;Door Type A&gt;</span></div>
   <div class="trow d-flex align-items-center"><i class="twig l2"></i><i class="sq4"></i><span class="fit" data-w="75">&lt;Door Type A&gt;</span></div>
   <div class="trow d-flex align-items-center"><i class="twig l2"></i><i class="sq4"></i><span class="fit" data-w="87">&lt;Office Closet A&gt;</span></div>
   <div class="trow d-flex align-items-center"><i class="twig l2"></i><i class="sq4"></i><span class="fit" data-w="86">&lt;Office Closet B&gt;</span></div>
   <div class="trow d-flex align-items-center"><i class="twig l2"></i><i class="sq4"></i><span class="fit" data-w="117">&lt;Upstairs Hall Closet A&gt;</span></div>
   <div class="trow d-flex align-items-center"><i class="twig l2 end"></i><i class="sq4"></i><span class="fit" data-w="116">&lt;Upstairs Hall Closet B&gt;</span></div>
  </div>
 </div>
</section>

<section class="palette d-flex flex-column" id="components">
 <div class="ptitle d-flex align-items-center"><span class="fit" data-w="68">Components</span></div>
 <div class="inner flex-grow-1" style="overflow:hidden">
  <div class="comp-h d-flex">
   <div class="thumb1"><svg width="64" height="69" viewBox="0 0 64 69"><path d="M2 30l22 26 4-10L10 26z" fill="#ddd"/><g fill="none" stroke="#bdbdbd" stroke-width="3"><path d="M6 17L38 5 61 29 56 48 26 61 10 42zM6 17L27 44 61 29M27 44v18"/><path d="M4 14l5 6M36 2l4 6M58 27l6 4M24 60l6 4M53 45l6 6"/></g><path d="M13 21L38 11 53 31 28 43z" fill="#fff" stroke="#777" stroke-width="2"/><path d="M28 43L53 31 52 46 28 56z" fill="#fff" stroke="#777" stroke-width="2"/><path d="M13 21v16l15 19V43z" fill="#eee" stroke="#777" stroke-width="2"/></svg></div>
   <div style="margin-left:4px"><div class="sunk" style="width:125px;height:19px;margin-bottom:3px"></div><div class="sunk" style="width:125px;height:49px"></div></div>
  </div>
  <div class="tabs tah d-flex">
   <span class="d-flex align-items-center border-end border-2 border-secondary" style="width:46px;padding-left:7px;padding-bottom:3px"><span class="fit" style="height:auto" data-w="30">Select</span></span>
   <span class="d-flex align-items-center border-end border-2 border-secondary" style="width:40px;padding-left:3px;margin-top:2px;height:18px"><span class="fit" style="height:auto" data-w="19">Edit</span></span>
   <span class="d-flex align-items-center border-start border-end border-secondary" style="width:55px;padding-left:4px;margin-top:2px;height:18px"><span class="fit" style="height:auto" data-w="44">Statistics</span></span>
  </div>
  <div class="ctool d-flex">
   <span class="rais d-flex align-items-center" style="width:31px;margin-right:4px"><svg width="29" height="18"><path d="M2.500 3.500h4v4h-4zM2.500 10.500h4v4h-4z" fill="none" stroke="#000"/><path d="M9 4.500h6M9 7.500h6M9 11.500h6M9 14.500h6" stroke="#000"/><path d="M19 7h9l-4.500 5z"/></svg></span>
   <span class="rais d-flex align-items-center justify-content-center" style="width:21px"><svg width="14" height="14"><use href="#home"/></svg></span>
   <span class="rais d-flex align-items-center justify-content-center" style="width:14px;margin-right:2px"><svg width="10" height="6"><path d="M0 0h10L5 6z"/></svg></span>
   <span class="bg-white border border-secondary d-flex align-items-center" style="width:128px;height:20px;padding-left:2px"><span class="goog fit" data-w="40"><span style="color:#6a8fd0">G</span><span style="color:#dd7c70">o</span><span style="color:#e2c560">o</span><span style="color:#6a8fd0">g</span><span style="color:#80b880">l</span><span style="color:#dd7c70">e</span></span><span class="border-start border-secondary d-flex align-items-center justify-content-center ms-auto h-100" style="width:20px"><svg width="14" height="14" viewBox="0 0 14 14"><circle cx="8.500" cy="5.500" r="4" fill="none" stroke="#000" stroke-width="1.300"/><path d="M1 13l4.500-4.500" stroke="#000" stroke-width="2.500"/></svg></span></span>
  </div>
  <div class="clist">
   <div class="citem d-flex"><div class="cthumb"><svg width="62" height="62"><path d="M3 31L59 23v6L3 38z" fill="none" stroke="#ddd"/><path d="M4 38l20-3M40 33l13-2" stroke="#666"/></svg></div><div class="ctext"><b><span class="fit" data-w="123">Door (Front Entrance)</span></b>by <em>Unknown</em><br><em>No Description</em></div></div>
   <div class="citem d-flex"><div class="cthumb"><svg width="62" height="62"><path d="M24 45L22 18 44 15 42 38" fill="none" stroke="#999"/><path d="M45 16l-2 21" stroke="#88a"/></svg></div><div class="ctext"><b><span class="fit" data-w="68">Door (Patio)</span></b>by <em>Unknown</em><br><em>No Description</em></div></div>
   <div class="citem d-flex"><div class="cthumb"><svg width="62" height="62"><path d="M28 40V15h9v25" fill="none" stroke="#aaa"/><path d="M38 15v25" stroke="#88a"/></svg></div><div class="ctext"><b><span class="fit" data-w="71">Door Type A</span></b>by <em>Unknown</em></div></div>
  </div>
  <div class="cfoot tah d-flex align-items-center"><svg width="12" height="12" viewBox="0 0 12 12" style="margin-left:4px"><path d="M1 6l5-4.500V4.500h4.500v3H6v3z" fill="#fff" stroke="#000" stroke-width="1.400"/></svg><span class="fit" style="margin-left:76px" data-w="41">In Model</span></div>
 </div>
</section>
</div>
<script>
// Spread each label over its nominal width in pixels
document.fonts.ready.then(function () {
  document.querySelectorAll('.fit').forEach(function (el) {
    var n = el.textContent.length, w = el.getBoundingClientRect().width;
    el.style.letterSpacing = ((+el.dataset.w - w) / n).toFixed(3) + 'px';
  });
});
</script>
</body>
</html>
